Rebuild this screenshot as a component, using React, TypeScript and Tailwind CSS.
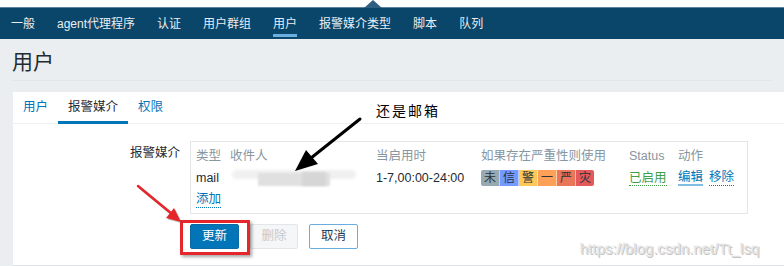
import React from "react";

const navItems = ["一般", "agent代理程序", "认证", "用户群组", "用户", "报警媒介类型", "脚本", "队列"];

const sev = [
  { c: "未", bg: "bg-[#97aab3]" },
  { c: "信", bg: "bg-[#7499ff]" },
  { c: "警", bg: "bg-[#ffc859]" },
  { c: "一", bg: "bg-[#ffa059]" },
  { c: "严", bg: "bg-[#e97659]" },
  { c: "灾", bg: "bg-[#e45959]" },
];

export default function App() {
  return (
    <div
      className="relative w-[784px] h-[266px] overflow-hidden bg-white text-[12px] text-[#1f2c33]"
      style={{ fontFamily: '"Liberation Sans", "Noto Sans CJK SC", sans-serif' }}
    >
      {/* top strip */}
      <div className="relative h-[7px] bg-white">
        <svg className="absolute left-[364px] top-0" width="18" height="8" viewBox="0 0 18 8">
          <polygon points="0,8 9,0 18,8" fill="#2f5f80" />
        </svg>
      </div>
      {/* nav */}
      <div className="h-[32px] bg-[#0a466a] border-t border-[#5c83a0] flex items-stretch">
        {navItems.map((t) => (
          <div key={t} className="relative px-[11px] flex items-center text-[#e8eef2] text-[12px] leading-none">
            <span>{t}</span>
            {t === "用户" && (
              <span className="absolute left-[11px] right-[11px] bottom-[2px] h-[3px] bg-[#69b0e0]" />
            )}
          </div>
        ))}
      </div>
      {/* page */}
      <div className="bg-[#ebeef0] h-[227px] flex flex-col">
        <div className="mx-[12px] h-[42px] border-b border-[#e2e6e9] flex items-center">
          <span className="text-[21px] leading-none text-[#1f2c33] pt-[2px]" style={{ fontFamily: '"Noto Sans CJK SC", sans-serif' }}>用户</span>
        </div>
        <div className="ml-[13px] mt-[11px] flex-1 bg-white border-b border-[#dde1e4] flex flex-col">
          {/* tabs */}
          <div className="h-[32px] border-b border-[#eef0f2] flex items-stretch">
            <div className="px-[10px] flex items-center text-[#0275b8] text-[12.5px]">用户</div>
            <div className="relative px-[10px] flex items-center text-[#1f2c33] text-[12.5px]">
              报警媒介
              <span className="absolute left-0 right-0 bottom-[-1px] h-[3px] bg-[#0275b8]" />
            </div>
            <div className="px-[10px] flex items-center text-[#0275b8] text-[12.5px]">权限</div>
          </div>
          {/* form */}
          <div className="pt-[17px] flex">
            <div className="w-[167px] text-right pt-[3px] text-[12.5px] text-[#1f2c33]">报警媒介</div>
            <div className="ml-[10px] flex flex-col">
              <div className="w-[558px] h-[73px] border border-[#e3e6e9] py-[3px] pl-[5px]">
                <div className="grid grid-cols-[34px_146px_105px_148px_49px_80px] h-[22px] items-center text-[#8796a0] text-[12.5px]">
                  <span>类型</span>
                  <span>收件人</span>
                  <span>当启用时</span>
                  <span>如果存在严重性则使用</span>
                  <span>Status</span>
                  <span>动作</span>
                </div>
                <div className="grid grid-cols-[34px_146px_105px_148px_49px_80px] h-[22px] items-center text-[12.5px]">
                  <span>mail</span>
                  <div className="relative h-[18px]">
                    <div className="absolute left-[2px] top-[1px] w-[124px] h-[9px] bg-[#f0f0f0] blur-[1.5px] rounded-full" />
                    <div className="absolute left-[28px] top-[4px] w-[72px] h-[13px] bg-[#e0e0e0] blur-[1px]" />
                    <div className="absolute left-[72px] top-[3px] w-[24px] h-[14px] bg-[#d6d6d6] blur-[1px]" />
                  </div>
                  <span>1-7,00:00-24:00</span>
                  <div className="flex h-[16px] w-[113px] rounded-[2px] overflow-hidden">
                    {sev.map((s) => (
                      <div key={s.c} className={`${s.bg} flex-1 flex items-center justify-center border-r border-white/50 last:border-r-0 text-[12px] leading-none text-[#2a3338]`}>
                        {s.c}
                      </div>
                    ))}
                  </div>
                  <span className="text-[#429e47] border-b border-dotted border-[#429e47] w-fit leading-[14px]">已启用</span>
                  <div className="flex gap-[6px]">
                    <span className="text-[#0275b8] border-b-2 border-[#7fbde6] leading-[14px]">编辑</span>
                    <span className="text-[#0275b8] border-b border-dotted border-[#0275b8] leading-[14px]">移除</span>
                  </div>
                </div>
                <div className="h-[22px] flex items-center text-[12.5px]">
                  <span className="text-[#0275b8] border-b border-dotted border-[#0275b8] leading-[15px]">添加</span>
                </div>
              </div>
              <div className="mt-[10px] flex gap-[11px]">
                <button className="w-[49px] h-[25px] rounded-[2px] bg-[#0275b8] border border-[#0a6aa5] text-white text-[12.5px]">更新</button>
                <button className="w-[48px] h-[25px] rounded-[2px] bg-[#f5f6f7] border border-[#e3e6e8] text-[#c5c9cc] text-[12.5px]">删除</button>
                <button className="w-[49px] h-[25px] rounded-[2px] bg-white border border-[#6aaee0] text-[#1f3d55] text-[12.5px]">取消</button>
              </div>
            </div>
          </div>
        </div>
      </div>

      {/* annotation text */}
      <div
        className="absolute left-[376px] top-[101px] text-[14px] font-normal tracking-[2px] text-black"
        style={{ fontFamily: '"Liberation Serif", "Noto Sans CJK SC", serif' }}
      >
        还是邮箱
      </div>

      {/* red highlight box */}
      <div className="absolute left-[180px] top-[220px] w-[70px] h-[35px] border-[3px] border-[#e5262b] shadow-[2px_2px_3px_rgba(0,0,0,0.35)]" />

      {/* arrows */}
      <svg className="absolute left-0 top-0 pointer-events-none" width="784" height="266">
        <line x1="360" y1="119" x2="306" y2="162" stroke="#000" strokeWidth="3" strokeLinecap="round" />
        <polygon points="295,171 318,164 306,150" fill="#000" />
        <g opacity="0.35" transform="translate(1.5,1.5)">
          <line x1="138" y1="186" x2="172" y2="214" stroke="#555" strokeWidth="2.5" />
          <polygon points="181,222 166,218 174,208" fill="#555" />
        </g>
        <line x1="138" y1="186" x2="172" y2="214" stroke="#e5262b" strokeWidth="2.5" strokeLinecap="round" />
        <polygon points="181,222 166,218 174,208" fill="#e5262b" />
      </svg>

      {/* watermark */}
      <div
        className="absolute left-[580px] top-[238px] text-[15px] text-[#e2e2e2]"
        style={{ textShadow: "1px 1px 0 #c4c4c4, -1px -1px 0 #f6f6f6" }}
      >
        https://blog.csdn.net/Tt_lsq
      </div>
    </div>
  );
}
